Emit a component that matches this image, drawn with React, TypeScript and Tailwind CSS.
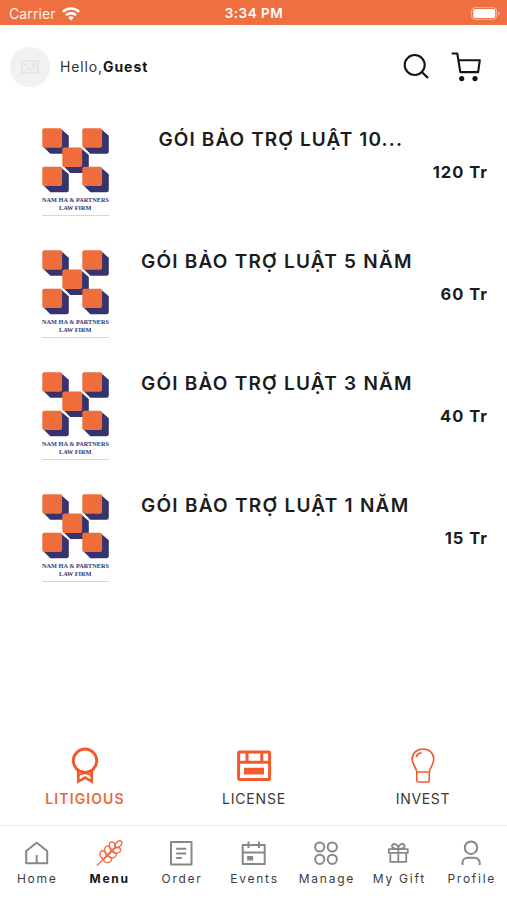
import type { ReactNode } from "react";

interface Package {
  id: number;
  name: string;
  price: string;
  nameClass: string;
}

const packages: Package[] = [
  { id: 1, name: "GÓI BẢO TRỢ LUẬT 10...", price: "120 Tr", nameClass: "pl-[49.5px] tracking-[1.1px]" },
  { id: 2, name: "GÓI BẢO TRỢ LUẬT 5 NĂM", price: "60 Tr", nameClass: "pl-8 tracking-[1.23px]" },
  { id: 3, name: "GÓI BẢO TRỢ LUẬT 3 NĂM", price: "40 Tr", nameClass: "pl-8 tracking-[1.23px]" },
  { id: 4, name: "GÓI BẢO TRỢ LUẬT 1 NĂM", price: "15 Tr", nameClass: "pl-8 tracking-[1.26px]" },
];

export default function App() {
  return (
    <div className="w-[507px] h-[900px] bg-white flex flex-col overflow-hidden font-['Inter',sans-serif] text-[#1c1c1c]">
      <StatusBar />
      <Header />
      <main className="flex-1 pt-[19px]">
        {packages.map((p) => (
          <PackageRow key={p.id} item={p} />
        ))}
      </main>
      <CategoryTabs />
      <BottomNav />
    </div>
  );
}

function StatusBar() {
  return (
    <div className="h-[25px] shrink-0 bg-[#ee7040] text-white grid grid-cols-3 items-center pt-[2px]">
      <div className="flex items-center gap-[6px] pl-[9px]">
        <span className="text-[14px] leading-none tracking-[0.1px] text-white/90">Carrier</span>
        <svg width="18" height="14" viewBox="0 0 18 14" fill="none" stroke="#fff" strokeWidth="2.5">
          <path d="M0.9 4.9a11.6 11.6 0 0 1 16.2 0" />
          <path d="M4 8.2a7.2 7.2 0 0 1 10 0" />
          <path d="M9 13.6 6.2 10.7a4 4 0 0 1 5.6 0z" fill="#fff" stroke="none" />
        </svg>
      </div>
      <span className="text-[13.5px] leading-none font-semibold tracking-[0.5px] text-center pl-px">3:34 PM</span>
      <div className="flex justify-end pr-[6px]">
        <svg width="30" height="13" viewBox="0 0 30 13" fill="none">
          <rect x="0.6" y="0.6" width="25" height="11.8" rx="3.4" stroke="#fff" strokeOpacity="0.5" />
          <rect x="2.2" y="2.1" width="22" height="8.8" rx="2" fill="#fff" />
          <path d="M27.2 4.5c1.8.6 1.8 3.4 0 4z" fill="#fff" fillOpacity="0.55" />
        </svg>
      </div>
    </div>
  );
}

function Header() {
  return (
    <header className="h-[84px] shrink-0 flex items-center pl-[10px] pr-[26px]">
      <div className="w-10 h-10 rounded-full bg-[#f1f1f1] flex items-center justify-center">
        <svg width="18" height="14" viewBox="0 0 18 14" fill="none" stroke="#e2e2e2" strokeWidth="1.4">
          <rect x="1" y="1" width="16" height="12" />
          <path d="M3 5h4M11 4h3v3M4 10l3-2 3 2 4-3" />
        </svg>
      </div>
      <p className="ml-[10px] flex-1 text-[14px] leading-5 tracking-[0.85px] text-[#333]">
        Hello,<span className="font-bold tracking-[0.98px] text-[#151515]">Guest</span>
      </p>
      <svg className="mr-[19px]" width="30" height="30" viewBox="0 0 30 30" fill="none" stroke="#141414" strokeWidth="2.1">
        <circle cx="12.7" cy="13" r="10" />
        <path d="M19.8 20 26 26" strokeWidth="2.4" />
      </svg>
      <svg width="30" height="30" viewBox="0 0 30 30" fill="none" stroke="#141414" strokeWidth="2.1" strokeLinejoin="round">
        <path d="M0.7 1.5h5.6l3 18.6h17.8l1.7-11.8H7.4" />
        <circle cx="10.7" cy="26.6" r="2.6" fill="#141414" stroke="none" />
        <circle cx="24" cy="26.6" r="2.6" fill="#141414" stroke="none" />
      </svg>
    </header>
  );
}

function PackageRow({ item }: { item: Package }) {
  return (
    <div className="h-[122px] flex pl-[42px] pr-[19px]">
      <FirmLogo />
      <div className="flex-1 min-w-0 flex flex-col">
        <h2 className={`text-[19px] leading-[23px] font-[640] whitespace-nowrap ${item.nameClass}`}>{item.name}</h2>
        <span className="mt-[10px] self-end text-[16.5px] leading-[22px] font-[660] tracking-[1px]">{item.price}</span>
      </div>
    </div>
  );
}

// top-left corner of each block
const blocks = [
  [0.3, 0.3],
  [40.3, 0.3],
  [20.3, 19.5],
  [0.3, 38.7],
  [40.3, 38.7],
];

function FirmLogo() {
  return (
    <svg className="w-[67px] h-[90px] shrink-0" viewBox="0 0 67 90">
      {blocks.map(([x, y]) => (
        <g key={`${x}-${y}`} transform={`translate(${x} ${y})`}>
          <path d="M1 18.5 8 25.500H24.200a2.300 2.300 0 0 0 2.300-2.300V7.500L19 1z" fill="#36346e" />
          <rect width="19.8" height="19.4" rx="2" fill="#ee6d3a" />
        </g>
      ))}
      <g fill="#36346e" fontFamily="'Liberation Serif', serif" fontWeight="700" fontSize="6.4">
        <text x="0" y="74" textLength="67" lengthAdjust="spacingAndGlyphs">NAM HA &amp; PARTNERS</text>
        <text x="17" y="82.4" textLength="32.5" lengthAdjust="spacingAndGlyphs">LAW FIRM</text>
      </g>
      <path d="M0 87.5h67" stroke="#dcdca8" strokeWidth="1.2" />
    </svg>
  );
}

function CategoryTabs() {
  return (
    <div className="h-[79px] shrink-0 grid grid-cols-3 text-[14px] text-[#3a3a3a]">
      <Category label={<span className="font-semibold text-[#e96a3c] tracking-[1.1px]">LITIGIOUS</span>}>
        <svg width="36" height="38" viewBox="0 0 36 38" fill="none" stroke="#f4592c" strokeWidth="3">
          <circle cx="18" cy="14.8" r="11.7" />
          <path d="M11.3 24v11.5l6.7-3.9 6.7 3.9V24" strokeWidth="2.6" />
          <path d="M11.2 29.3l6.8-2 6.800 2" strokeWidth="1.5" />
        </svg>
      </Category>
      <Category label={<span className="tracking-[0.8px]">LICENSE</span>}>
        <svg width="36" height="38" viewBox="0 0 36 38" fill="none" stroke="#f4592c" strokeWidth="3">
          <rect x="2.6" y="6" width="31" height="27.5" rx="1" />
          <path d="M2.800 16.300h31M11 7v9M25.800 7v9" />
          <rect x="8" y="21.800" width="20" height="6.700" fill="#f4592c" stroke="none" />
        </svg>
      </Category>
      <Category label={<span className="tracking-[0.7px]">INVEST</span>}>
        <svg width="36" height="38" viewBox="0 0 36 38" fill="none" stroke="#f4592c" strokeWidth="1.6" strokeLinejoin="round">
          <path d="M11.8 26C11.100 21 7.100 18.500 7.100 13 7.100 7.200 11.800 3 18 3S28.800 7.200 28.800 13c0 5.500-3.800 8-4.500 13z" />
          <path d="M11.800 26v8.500a1.500 1.500 0 0 0 1.500 1.500h9.500a1.500 1.500 0 0 0 1.500-1.500v-8.500" />
          <path d="M11.500 11.200c.3-2.300 2.300-4 5-4.300" strokeWidth="1.9" />
        </svg>
      </Category>
    </div>
  );
}

function Category({ label, children }: { label: ReactNode; children: ReactNode }) {
  return (
    <button className="flex flex-col items-center">
      {children}
      <span className="mt-[5px] pl-px leading-5">{label}</span>
    </button>
  );
}

function BottomNav() {
  return (
    <nav className="h-[75px] shrink-0 border-t border-[#ececec] grid grid-cols-7 pt-[13px]">
      <NavItem label="Home">
        <path d="M4.200 12 14.700 3.800 25.200 12v12.300h-21zM14.700 16v8" />
      </NavItem>
      <NavItem label="Menu" active>
        <g stroke="#ed6f43" strokeWidth="1.4">
          <path d="M2 26.500 20.500 8" />
          <ellipse cx="23.400" cy="5.200" rx="2.500" ry="4" transform="rotate(45 23.400 5.200)" />
          <ellipse cx="17.200" cy="6.800" rx="2.900" ry="3.900" transform="rotate(-12 17.200 6.800)" />
          <ellipse cx="12.700" cy="11.200" rx="3" ry="4.100" transform="rotate(-12 12.700 11.200)" />
          <ellipse cx="8.100" cy="15.800" rx="3" ry="4.100" transform="rotate(-12 8.100 15.800)" />
          <ellipse cx="21.700" cy="11.300" rx="3.900" ry="2.900" transform="rotate(-12 21.700 11.300)" />
          <ellipse cx="17.300" cy="15.900" rx="4.100" ry="3" transform="rotate(-12 17.300 15.900)" />
          <ellipse cx="12.700" cy="20.500" rx="4.100" ry="3" transform="rotate(-12 12.700 20.500)" />
        </g>
      </NavItem>
      <NavItem label="Order">
        <path d="M4 3h20.500v22.500H4zM9.200 9.700h10M9.200 14.500h10M9.200 19h5.600" />
      </NavItem>
      <NavItem label="Events">
        <path d="M3.700 6h22v19h-22zM4 13.500h22M9.500 2.500v6.500M20 2.500v6.500" />
        <path d="M8.100 17h6v4.500h-6z" fill="#888" stroke="none" />
      </NavItem>
      <NavItem label="Manage">
        <circle cx="7.700" cy="8" r="4.600" />
        <circle cx="20.300" cy="8" r="4.600" />
        <circle cx="7.700" cy="20.300" r="4.600" />
        <circle cx="20.300" cy="20.300" r="4.600" />
      </NavItem>
      <NavItem label="My Gift">
        <path d="M4.800 10.200h19v3.600h-19zM6.300 13.800h16v9h-16zM14.300 10v12.800M14.300 10C5.800 10 7.300 5 10.300 5c2.500 0 4 2.500 4 5 0-2.500 1.500-5 4-5 3 0 4.500 5-4 5" strokeWidth="1.8" />
      </NavItem>
      <NavItem label="Profile">
        <circle cx="14" cy="8.700" r="6.200" />
        <path d="M5.500 26v-2.200a5 5 0 0 1 5-5h7.200a5 5 0 0 1 5 5v2.200" />
      </NavItem>
    </nav>
  );
}

function NavItem({ label, active, children }: { label: string; active?: boolean; children: ReactNode }) {
  return (
    <button className="flex flex-col items-center">
      <svg width="28" height="28" viewBox="0 0 28 28" fill="none" stroke="#888" strokeWidth="2" strokeLinejoin="round">
        {children}
      </svg>
      <span
        className={
          active
            ? "mt-1 pl-[2px] text-[12px] leading-4 tracking-[1.75px] font-bold text-[#161616] whitespace-nowrap"
            : "mt-1 pl-[2px] text-[12px] leading-4 tracking-[1.75px] text-[#3c3c3c] whitespace-nowrap"
        }
      >
        {label}
      </span>
    </button>
  );
}
